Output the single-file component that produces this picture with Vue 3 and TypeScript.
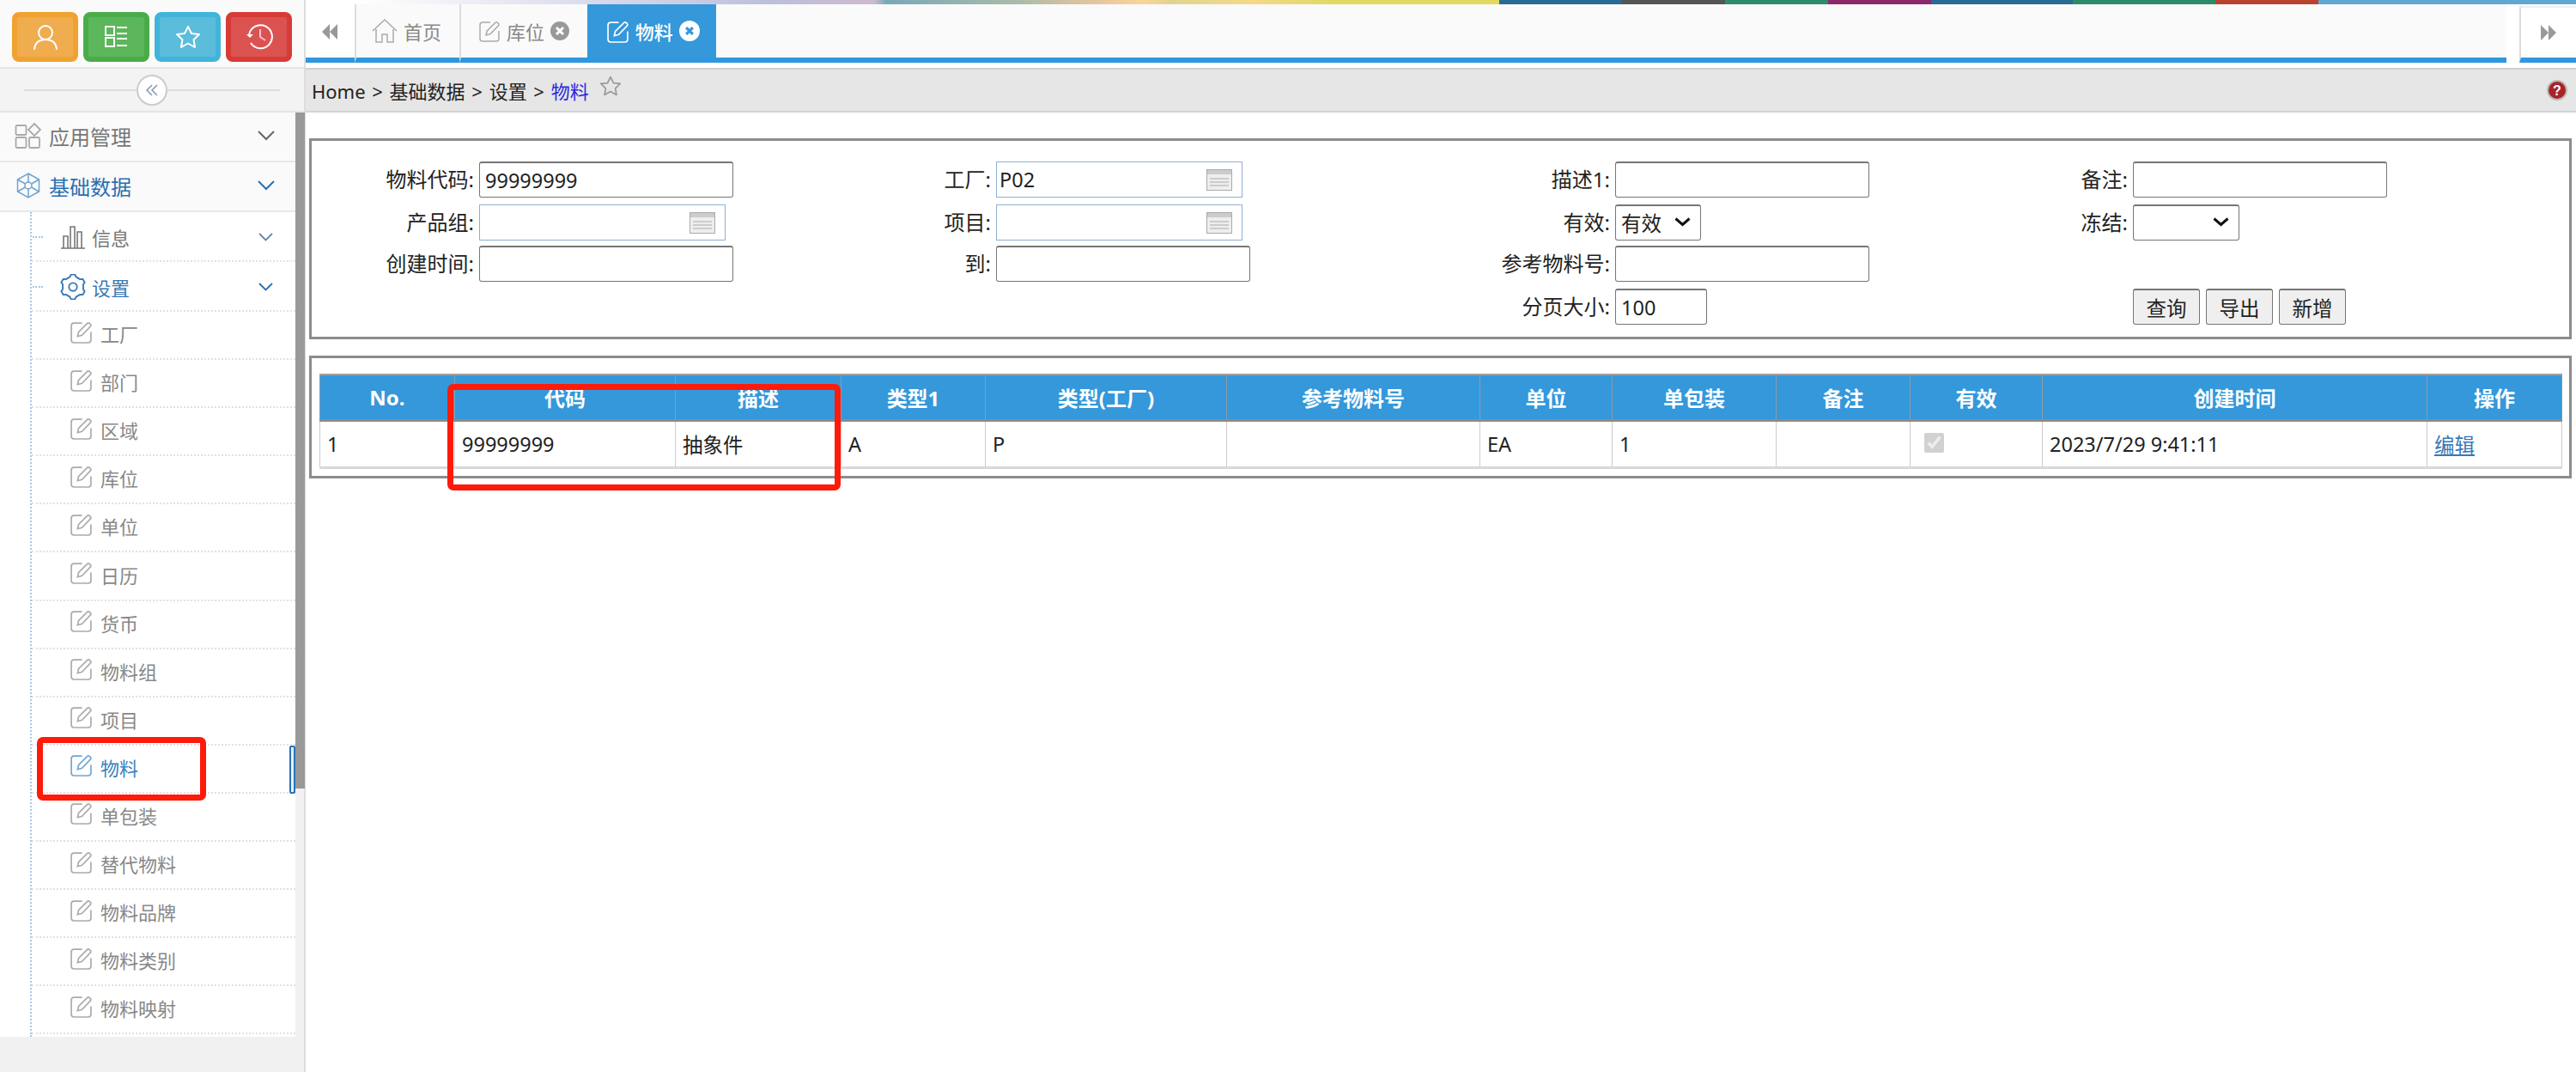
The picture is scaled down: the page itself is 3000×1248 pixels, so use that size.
<script setup lang="ts">
const EDIT_BOX = 'M14 3H5a3 3 0 0 0-3 3v16a3 3 0 0 0 3 3h16a3 3 0 0 0 3-3V13'
const EDIT_PEN = 'M9 18l1.2-5L20 3.2a1.6 1.6 0 0 1 2.3 0l1.2 1.2a1.6 1.6 0 0 1 0 2.3L14 16.600z'

const leaves: string[] = ['工厂', '部门', '区域', '库位', '单位', '日历', '货币', '物料组', '项目', '物料', '单包装', '替代物料', '物料品牌', '物料类别', '物料映射']

const columns: { label: string; width: number }[] = [
  { label: 'No.', width: 157 },
  { label: '代码', width: 257 },
  { label: '描述', width: 193 },
  { label: '类型1', width: 168 },
  { label: '类型(工厂)', width: 281 },
  { label: '参考物料号', width: 295 },
  { label: '单位', width: 154 },
  { label: '单包装', width: 191 },
  { label: '备注', width: 156 },
  { label: '有效', width: 154 },
  { label: '创建时间', width: 448 },
  { label: '操作', width: 157 },
]

function gearPoints(): string {
  const pts: string[] = []
  const teeth = 6
  for (let i = 0; i < teeth; i++) {
    const a = (i * Math.PI * 2) / teeth - Math.PI / 2
    const offsets: [number, number][] = [[-0.3, 13], [-0.16, 15.500], [0.16, 15.500], [0.3, 13]]
    for (const [d, r] of offsets) {
      pts.push(`${(16 + r * Math.cos(a + d)).toFixed(1)},${(16 + r * Math.sin(a + d)).toFixed(1)}`)
    }
  }
  return pts.join(' ')
}
const gear = gearPoints()
</script>

<template>
  <div class="app">
    <aside class="sidebar">
      <div class="quick">
        <button class="qbtn orange" type="button">
          <svg width="30" height="30" viewBox="0 0 30 30" fill="none" stroke="#fff" stroke-width="2"><circle cx="15" cy="10" r="8" /><path d="M2 29c1-8 6-11 13-11s12 3 13 11" stroke-linecap="round" /></svg>
        </button>
        <button class="qbtn green" type="button">
          <svg width="28" height="26" viewBox="0 0 28 26" fill="none" stroke="#fff" stroke-width="2"><rect x="1" y="1" width="10" height="10" /><rect x="1" y="14" width="10" height="10" /><path d="M14 2h12M14 9h12M14 15h12M14 23h12" /></svg>
        </button>
        <button class="qbtn blue" type="button">
          <svg width="30" height="28" viewBox="0 0 30 28" fill="none" stroke="#fff" stroke-width="2" stroke-linejoin="round"><path d="M15 2l4 8 9 1-6.500 6.200L23 26l-8-4.500L7 26l1.500-8.800L2 11l9-1z" /></svg>
        </button>
        <button class="qbtn red" type="button">
          <svg width="32" height="30" viewBox="0 0 32 30" fill="none" stroke="#fff" stroke-width="2"><path d="M4 13A13.500 13.500 0 1 1 6 22" /><path d="M1 12l4 4 4-4z" fill="#fff" stroke="none" /><path d="M17 6v9l6 4" stroke="#fbd" /></svg>
        </button>
      </div>
      <div class="collapse">
        <span class="collapse-line"></span>
        <span class="collapse-btn">
          <svg width="16" height="16" viewBox="0 0 16 16" fill="none" stroke="#8a9bb5" stroke-width="1.600"><path d="M8 2L2 8l6 6M14 2L8 8l6 6" /></svg>
        </span>
        <span class="collapse-line"></span>
      </div>
      <div class="menu-wrap">
        <nav class="menu">
          <div class="top-row">
            <svg class="top-icon" width="32" height="32" viewBox="0 0 32 32" fill="none" stroke="#aaa" stroke-width="1.800"><rect x="1.500" y="4" width="12" height="11" rx="1.500" /><rect x="1.500" y="18" width="12" height="12" rx="1.500" /><rect x="17" y="18" width="12" height="12" rx="1.500" /><path d="M23 2l7 7-7 7-7-7z" /></svg>
            <span class="top-label">应用管理</span>
            <svg class="chev" width="20" height="12" viewBox="0 0 20 12" fill="none" stroke="#666" stroke-width="2"><path d="M1 1l9 9 9-9" /></svg>
          </div>
          <div class="top-row active">
            <svg class="top-icon" width="32" height="32" viewBox="0 0 32 32" fill="none" stroke="#6fa3d0" stroke-width="1.500"><path d="M16 2l12.500 7v14L16 30 3.500 23V9z" /><path d="M16 2v10M16 20v10M3.500 9l9 5M19.500 18l9 5M28.500 9l-9 5M12.500 18l-9 5" /><circle cx="16" cy="16" r="4" /></svg>
            <span class="top-label">基础数据</span>
            <svg class="chev" width="20" height="12" viewBox="0 0 20 12" fill="none" stroke="#2a6fb0" stroke-width="2"><path d="M1 1l9 9 9-9" /></svg>
          </div>
          <div class="tree">
            <div class="sub-row">
              <svg class="sub-icon" width="30" height="30" viewBox="0 0 30 30" fill="none" stroke="#777" stroke-width="1.600"><path d="M1 28h28M4 28V14h5v14M12 28V3h5v25M20 28V9h5v19" /></svg>
              <span>信息</span>
              <svg class="chev small" width="17" height="10" viewBox="0 0 17 10" fill="none" stroke="#6a86a0" stroke-width="1.800"><path d="M1 1l7.500 7.500L16 1" /></svg>
            </div>
            <div class="sub-row active">
              <svg class="sub-icon" width="30" height="30" viewBox="0 0 32 32" fill="none" stroke="#3a78b5" stroke-width="2" stroke-linejoin="round"><polygon :points="gear" /><circle cx="16" cy="16" r="5" /></svg>
              <span>设置</span>
              <svg class="chev small" width="17" height="10" viewBox="0 0 17 10" fill="none" stroke="#2a6fb0" stroke-width="1.800"><path d="M1 1l7.500 7.500L16 1" /></svg>
            </div>
            <div v-for="leaf in leaves" :key="leaf" class="leaf" :class="{ current: leaf === '物料' }">
              <svg width="27" height="27" viewBox="0 0 26 26" fill="none" stroke="currentColor" stroke-width="1.600" class="edit"><path :d="EDIT_BOX" /><path :d="EDIT_PEN" /></svg>
              <span class="leaf-text">{{ leaf }}</span>
              <i v-if="leaf === '物料'" class="marker"></i>
            </div>
          </div>
        </nav>
        <div class="scrollbar"><div class="thumb"></div></div>
      </div>
      <div class="side-foot"></div>
    </aside>

    <main class="main">
      <div class="stripe"></div>
      <div class="tabs">
        <div class="tab-arrow">
          <svg width="20" height="20" viewBox="0 0 20 20" fill="#999"><path d="M10 1v18L1 10zM19 1v18l-9-9z" /></svg>
        </div>
        <div class="tab home">
          <svg width="30" height="30" viewBox="0 0 30 30" fill="none" stroke="#aaa" stroke-width="1.500"><path d="M1 15L15 2l14 13M5 13v15h7v-9h6v9h7V13" /></svg>
          <span>首页</span>
        </div>
        <div class="tab stock">
          <svg width="26" height="26" viewBox="0 0 26 26" fill="none" stroke="#aaa" stroke-width="1.500"><path :d="EDIT_BOX" /><path :d="EDIT_PEN" /></svg>
          <span>库位</span>
          <svg width="22" height="22" viewBox="0 0 22 22"><circle cx="11" cy="11" r="11" fill="#999" /><path d="M7 7l8 8M15 7l-8 8" stroke="#fff" stroke-width="3" /></svg>
        </div>
        <div class="tab on">
          <svg width="27" height="27" viewBox="0 0 26 26" fill="none" stroke="#fff" stroke-width="1.600"><path :d="EDIT_BOX" /><path :d="EDIT_PEN" /></svg>
          <span>物料</span>
          <svg width="24" height="24" viewBox="0 0 22 22"><circle cx="11" cy="11" r="11" fill="#fff" /><path d="M7.500 7.500l7 7M14.500 7.500l-7 7" stroke="#3498db" stroke-width="3" /></svg>
        </div>
        <div class="tab-fill"></div>
        <div class="tab-gap"></div>
        <div class="tab-arrow right">
          <svg width="20" height="20" viewBox="0 0 20 20" fill="#999"><path d="M1 1l9 9-9 9zM10 1l9 9-9 9z" /></svg>
        </div>
      </div>
      <div class="crumb">
        <span>Home &gt; 基础数据 &gt; 设置 &gt; </span>
        <span class="crumb-now">物料</span>
        <svg class="crumb-star" width="26" height="26" viewBox="0 0 30 28" fill="none" stroke="#999" stroke-width="2" stroke-linejoin="round"><path d="M15 2l4 8 9 1-6.500 6.200L23 26l-8-4.500L7 26l1.500-8.800L2 11l9-1z" /></svg>
        <svg class="crumb-help" width="24" height="24" viewBox="0 0 24 24"><circle cx="12" cy="12" r="11" fill="#a82428" stroke="#bbb" stroke-width="2" /><text x="12" y="18" text-anchor="middle" fill="#fff" font-size="16" font-weight="700" font-family="Liberation Sans, sans-serif">?</text></svg>
      </div>

      <section class="box search">
        <div class="form">
          <label>物料代码:</label>
          <div><input class="w296" value="99999999" /></div>
          <label>工厂:</label>
          <div class="lookup"><input class="blue-in" value="P02" /><svg class="cal" width="30" height="25" viewBox="0 0 30 25"><rect x=".5" y=".5" width="29" height="24" fill="#eee" stroke="#aaa" /><rect x="1" y="1" width="28" height="5" fill="#ccc" /><path d="M4 11h22M4 15h22M4 19h22" stroke="#ccc" stroke-width="2" /></svg></div>
          <label>描述1:</label>
          <div><input class="w296" /></div>
          <label>备注:</label>
          <div><input class="w296" /></div>

          <label>产品组:</label>
          <div class="lookup"><input class="blue-in" /><svg class="cal" width="30" height="25" viewBox="0 0 30 25"><rect x=".5" y=".5" width="29" height="24" fill="#eee" stroke="#aaa" /><rect x="1" y="1" width="28" height="5" fill="#ccc" /><path d="M4 11h22M4 15h22M4 19h22" stroke="#ccc" stroke-width="2" /></svg></div>
          <label>项目:</label>
          <div class="lookup"><input class="blue-in" /><svg class="cal" width="30" height="25" viewBox="0 0 30 25"><rect x=".5" y=".5" width="29" height="24" fill="#eee" stroke="#aaa" /><rect x="1" y="1" width="28" height="5" fill="#ccc" /><path d="M4 11h22M4 15h22M4 19h22" stroke="#ccc" stroke-width="2" /></svg></div>
          <label>有效:</label>
          <div class="pick sel-a"><select><option>有效</option></select><svg class="pick-chev" width="19" height="11" viewBox="0 0 19 11" fill="none" stroke="#111" stroke-width="3"><path d="M1.500 1.500l8 7 8-7" /></svg></div>
          <label>冻结:</label>
          <div class="pick sel-b"><select><option></option></select><svg class="pick-chev" width="19" height="11" viewBox="0 0 19 11" fill="none" stroke="#111" stroke-width="3"><path d="M1.500 1.500l8 7 8-7" /></svg></div>

          <label>创建时间:</label>
          <div><input class="w296" /></div>
          <label>到:</label>
          <div><input class="w296" /></div>
          <label>参考物料号:</label>
          <div><input class="w296" /></div>
          <span></span>
          <span></span>

          <span></span>
          <span></span>
          <span></span>
          <span></span>
          <label>分页大小:</label>
          <div><input class="w107" value="100" /></div>
          <span></span>
          <div class="actions">
            <button type="button">查询</button>
            <button type="button">导出</button>
            <button type="button">新增</button>
          </div>
        </div>
      </section>

      <section class="box result">
        <table>
          <colgroup>
            <col v-for="c in columns" :key="c.label" :style="{ width: c.width + 'px' }" />
          </colgroup>
          <thead>
            <tr><th v-for="c in columns" :key="c.label">{{ c.label }}</th></tr>
          </thead>
          <tbody>
            <tr>
              <td>1</td>
              <td>99999999</td>
              <td>抽象件</td>
              <td>A</td>
              <td>P</td>
              <td></td>
              <td>EA</td>
              <td>1</td>
              <td></td>
              <td class="check"><input type="checkbox" checked disabled /></td>
              <td>2023/7/29 9:41:11</td>
              <td><a href="#" class="link">编辑</a></td>
            </tr>
          </tbody>
        </table>
      </section>
    </main>

    <div class="mark mark-menu"></div>
    <div class="mark mark-table"></div>
  </div>
</template>

<style>
html, body { margin: 0; background: #fff; }
</style>

<style scoped>
.app {
  position: relative;
  display: flex;
  width: 3000px;
  height: 1248px;
  overflow: hidden;
  font-family: "Noto Sans", "Noto Sans CJK SC", sans-serif;
  font-size: 24px;
  color: #222;
  background: #fff;
}

/* sidebar */
.sidebar {
  width: 356px;
  flex: none;
  box-sizing: border-box;
  border-right: 2px solid #ddd;
  display: flex;
  flex-direction: column;
  background: #f1f1f1;
}
.quick {
  height: 80px;
  flex: none;
  box-sizing: border-box;
  padding: 14px 0 0 14px;
  display: flex;
  gap: 6px;
  background: #fafafa;
  border-bottom: 2px solid #e6e6e6;
}
.qbtn {
  width: 77px;
  height: 58px;
  box-sizing: border-box;
  border-radius: 8px;
  border: 6px solid;
  padding: 0;
  display: flex;
  align-items: center;
  justify-content: center;
}
.qbtn.orange { background: #efad50; border-color: #f0a231; }
.qbtn.green { background: #5cb65c; border-color: #49ac49; }
.qbtn.blue { background: #5bbcdc; border-color: #41b4da; }
.qbtn.red { background: #db5350; border-color: #d83b36; }
.collapse {
  height: 51px;
  flex: none;
  box-sizing: border-box;
  padding: 0 28px;
  display: flex;
  align-items: center;
  background: #f3f3f3;
  border-bottom: 2px solid #e4e4e4;
}
.collapse-line { flex: 1; height: 2px; background: #ddd; }
.collapse-btn {
  width: 36px;
  height: 36px;
  box-sizing: border-box;
  border: 2px solid #ccc;
  border-radius: 50%;
  background: #fff;
  display: flex;
  align-items: center;
  justify-content: center;
}
.menu-wrap { display: flex; flex: none; height: 1076px; }
.menu { width: 344px; flex: none; background: #fff; }
.scrollbar { width: 10px; flex: none; background: #f1f1f1; }
.thumb { height: 787px; background: #999; width: 11px; }
.side-foot { flex: 1; background: #f1f1f1; }
.top-row {
  height: 58px;
  box-sizing: border-box;
  padding: 0 24px 2px 17px;
  display: flex;
  align-items: center;
  gap: 8px;
  background: #fafafa;
  border-bottom: 2px solid #e8e8e8;
  color: #777;
  font-size: 24px;
}
.top-row.active { color: #2a6fb0; }
.top-label { flex: 1; }
.chev { flex: none; }
.tree {
  margin-left: 35px;
  padding-bottom: 3px;
  border-left: 2px dotted #a8c8e6;
  background: #fff;
}
.sub-row {
  position: relative;
  height: 58px;
  box-sizing: border-box;
  padding: 2px 26px 0 33px;
  display: flex;
  align-items: center;
  gap: 7px;
  color: #777;
  font-size: 22px;
  border-bottom: 2px dotted #e2e2e2;
}
.sub-row span { flex: 1; }
.sub-row::before {
  content: "";
  position: absolute;
  left: 1px;
  top: 28px;
  width: 12px;
  border-top: 2px dotted #a8c8e6;
}
.sub-row.active { color: #3a78b5; }
.leaf {
  position: relative;
  height: 56.100px;
  box-sizing: border-box;
  padding-left: 44px;
  display: flex;
  align-items: center;
  gap: 9px;
  color: #888;
  font-size: 22px;
  border-bottom: 2px dotted #e2e2e2;
}
.leaf .edit { color: #aaa; margin-top: -8px; }
.leaf-text { margin-top: -4px; }
.leaf.current { color: #3a82bd; }
.leaf.current .edit { color: #6ea6d4; }
.marker {
  position: absolute;
  right: 0;
  top: 0;
  bottom: -2px;
  width: 7px;
  box-sizing: border-box;
  border: 2px solid #2a72b5;
  border-radius: 2px;
  background: #e4f0fa;
}

/* main */
.main { flex: 1; min-width: 0; display: flex; flex-direction: column; }
.stripe {
  height: 5px;
  flex: none;
  background: linear-gradient(90deg,
    #fff 0, #fff 60px, #bcbfdc 544px, #cdbacd 662px, #7ba8b8 676px,
    #a8bcaa 830px, #cfc0a0 880px, #e8c8a0 930px, #fcd49a 974px,
    #dfd48f 1010px, #f5d98a 1100px, #e0d860 1200px, #e0d860 1390px,
    #2a6a94 1390px, #2a6a94 1533px, #555 1533px, #555 1653px,
    #2e8b6a 1653px, #2e8b6a 1773px, #8a2a6a 1773px, #8a2a6a 1893px,
    #2a6a94 1893px, #2a6a94 2058px, #2e8b6a 2058px, #2e8b6a 2224px,
    #b8432e 2224px, #b8432e 2344px, #5fa8d3 2344px, #5fa8d3 100%);
}
.tabs {
  height: 68px;
  flex: none;
  display: flex;
  align-items: stretch;
  position: relative;
}
.tabs > * { box-sizing: border-box; }
.tab-arrow {
  width: 57px;
  margin-top: 2px;
  border-bottom: 6px solid #2f97dd;
  display: flex;
  align-items: center;
  justify-content: center;
  background: #fff;
}
.tab-arrow.right { width: 66px; border-left: 2px solid #ddd; border-top: 2px solid #eee; }
.tab {
  display: flex;
  align-items: center;
  background: #fafafa;
  border-left: 2px solid #ddd;
  border-bottom: 6px solid #2f97dd;
  color: #888;
  font-size: 22px;
  gap: 7px;
}
.tab.home { width: 122px; padding-left: 18px; }
.tab.stock { width: 149px; padding-left: 20px; }
.tab.on {
  width: 150px;
  padding-left: 22px;
  border-left: 0;
  background: #3498db;
  color: #fff;
  font-weight: 500;
}
.tab-fill { width: 2087px; background: #fafafa; border-bottom: 6px solid #2f97dd; }
.tab-gap { flex: none; width: 15px; }
.crumb {
  height: 52px;
  flex: none;
  margin-top: 6px;
  box-sizing: border-box;
  padding: 0 8px 0 7px;
  display: flex;
  align-items: center;
  background: #e6e6e6;
  border-top: 2px solid #d0d0d0;
  border-bottom: 2px solid #d4d4d4;
  font-size: 22px;
  color: #222;
  white-space: pre;
  word-spacing: 2px;
}
.crumb-now { color: #2a2ae0; }
.crumb-star { margin: -10px 0 0 12px; }
.crumb-help { margin-left: auto; margin-right: 2px; }

.box {
  flex: none;
  margin-left: 4px;
  width: 2635px;
  box-sizing: border-box;
  border: 3px solid #8c8c8c;
  background: #fff;
}
.search {
  margin-top: 30px;
  height: 234px;
  padding-top: 24px;
}
.form {
  display: grid;
  grid-template-columns: 195px 296px 306px 296px 425px 297px 306px 1fr;
  grid-template-rows: 50px 48px 50px 42px;
}
.form label {
  display: flex;
  align-items: flex-start;
  justify-content: flex-end;
  height: 42px;
  line-height: 42px;
  padding-right: 6px;
  font-size: 24px;
  white-space: nowrap;
  color: #222;
}
.form input, .form select, .form button {
  font-family: inherit;
  font-size: 23.500px;
  color: #222;
  box-sizing: border-box;
  height: 42px;
  margin: 0;
}
.form input {
  display: block;
  padding: 0 6px;
  border: 1px solid #767676;
  border-top-width: 2px;
  border-radius: 3px;
  background: #fff;
  outline: none;
}
.w296 { width: 296px; }
.w107 { width: 107px; }
.lookup { position: relative; width: 287px; height: 42px; }
.form input.blue-in {
  width: 287px;
  border: 1px solid #8fb0d0;
  border-radius: 0;
  padding: 0 3px;
}
.cal { position: absolute; right: 12px; top: 9px; }
.pick { position: relative; height: 42px; }
.sel-a { width: 100px; }
.sel-b { width: 124px; }
.form select {
  display: block;
  width: 100%;
  appearance: none;
  border: 1px solid #767676;
  border-top-width: 2px;
  border-radius: 3px;
  background: #fff;
  padding: 0 6px;
}
.pick-chev { position: absolute; right: 12px; top: 15px; pointer-events: none; }
.actions { display: flex; gap: 7px; }
.form button {
  width: 78px;
  padding: 0;
  background: #efefef;
  border: 1px solid #767676;
  border-top-width: 2px;
  border-radius: 3px;
}

.result {
  margin-top: 19px;
  height: 143px;
  padding: 18px 8px 0 9px;
}
table {
  width: 2612px;
  table-layout: fixed;
  border-collapse: collapse;
  font-size: 24px;
}
th {
  height: 53px;
  box-sizing: border-box;
  padding: 0;
  background: #3498db;
  color: #fff;
  font-weight: 700;
  border: 1px solid #8d9aa5;
  border-top: 2px solid #a0a0a0;
  border-bottom: 3px solid #8c8c8c;
}
td {
  height: 55px;
  box-sizing: border-box;
  padding: 0 8px;
  border: 1px solid #ccc;
  border-bottom: 3px solid #d8d8d8;
  font-size: 23.500px;
  color: #222;
  white-space: nowrap;
}
.check { padding-left: 16px; }
.check input { width: 23px; height: 23px; margin: 0 0 6px; vertical-align: middle; }
.link { color: #3a78b5; }

/* annotation rectangles over the screenshot */
.mark {
  position: absolute;
  box-sizing: border-box;
  border: 7px solid #ff1a0a;
  border-radius: 7px;
  pointer-events: none;
}
.mark-menu { left: 43px; top: 858px; width: 197px; height: 74px; }
.mark-table { left: 521px; top: 447px; width: 458px; height: 124px; }
</style>
